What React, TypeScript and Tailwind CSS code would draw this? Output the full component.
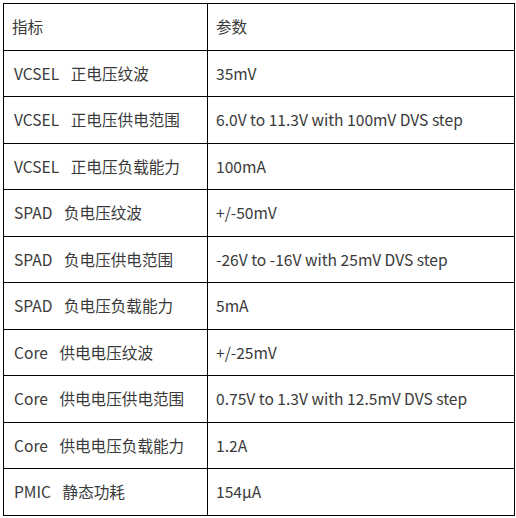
import React from 'react';

const rows: [string, string][] = [
  ['VCSEL 正电压纹波', '35mV'],
  ['VCSEL 正电压供电范围', '6.0V to 11.3V with 100mV DVS step'],
  ['VCSEL 正电压负载能力', '100mA'],
  ['SPAD 负电压纹波', '+/-50mV'],
  ['SPAD 负电压供电范围', '-26V to -16V with 25mV DVS step'],
  ['SPAD 负电压负载能力', '5mA'],
  ['Core 供电电压纹波', '+/-25mV'],
  ['Core 供电电压供电范围', '0.75V to 1.3V with 12.5mV DVS step'],
  ['Core 供电电压负载能力', '1.2A'],
  ['PMIC 静态功耗', '154μA'],
];

export default function App() {
  return (
    <div className="w-[516px] h-[518px] bg-white pt-[3px] pl-[3px]">
      <table
        className="w-[512px] border-collapse border border-black text-[15.6px] text-[#3a3a3a]"
        style={{ fontFamily: '"Noto Sans CJK SC", "Noto Sans", sans-serif' }}
      >
        <tbody>
          <tr className="h-[46.5px]">
            <td className="w-[204px] border border-black pl-[8px] align-middle">指标</td>
            <td className="border border-black pl-[8px] align-middle">参数</td>
          </tr>
          {rows.map(([name, value]) => (
            <tr key={name} className="h-[46.5px]">
              <td className="border border-black pl-[10px] align-middle [word-spacing:8px]">{name}</td>
              <td className="border border-black pl-[8px] align-middle">{value}</td>
            </tr>
          ))}
        </tbody>
      </table>
    </div>
  );
}
